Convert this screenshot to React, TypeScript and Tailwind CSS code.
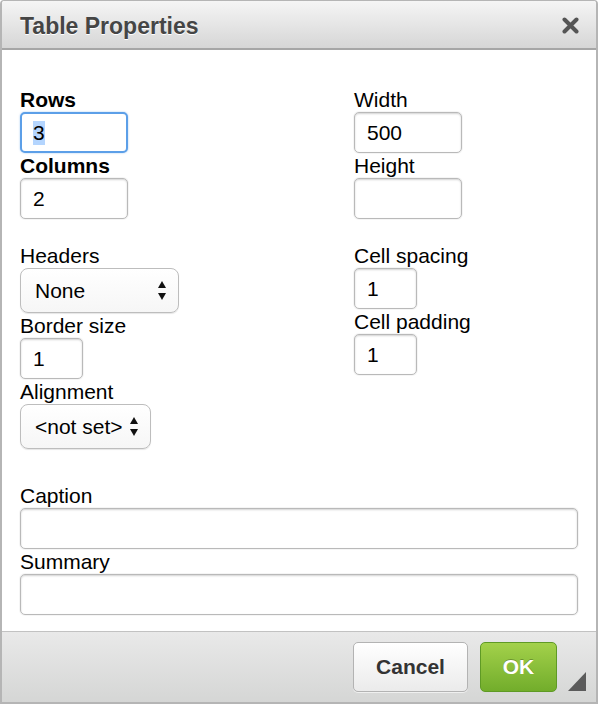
import React from "react";

const labelCls = "block h-[25px] text-[21px] leading-[25px] text-black";
const inputCls =
  "block h-[41px] rounded-[5px] border border-[#b9b9b9] bg-white px-[12px] text-[21px] text-black shadow-[inset_0_1px_2px_rgba(0,0,0,0.18),0_0_0_1px_rgba(0,0,0,0.04)] outline-none";

function Field({ label, value, width, bold }: { label: string; value?: string; width: string; bold?: boolean }) {
  return (
    <div>
      <label className={`${labelCls} ${bold ? "font-bold" : ""}`}>{label}</label>
      <input readOnly value={value ?? ""} className={`${inputCls} ${width}`} />
    </div>
  );
}

function Arrows() {
  return (
    <svg width="8" height="19" viewBox="0 0 8 19" className="shrink-0">
      <polygon points="4,0 8,7 0,7" fill="#111" />
      <polygon points="0,12 8,12 4,19" fill="#111" />
    </svg>
  );
}

function Select({ label, value, width }: { label: string; value: string; width: string }) {
  return (
    <div>
      <label className={labelCls}>{label}</label>
      <div
        className={`flex h-[45px] items-center justify-between rounded-[8px] border border-[#bdbdbd] bg-gradient-to-b from-white to-[#f6f6f6] pl-[14px] pr-[12px] text-[21px] text-black shadow-[0_1px_1px_rgba(0,0,0,0.1)] ${width}`}
      >
        <span>{value}</span>
        <Arrows />
      </div>
    </div>
  );
}

export default function App() {
  return (
    <div className="h-[704px] w-[599px] bg-white font-['Liberation_Sans',Arial,sans-serif]">
      <div className="relative flex h-full w-[598px] flex-col overflow-hidden rounded-t-[4px] border-x-2 border-t border-b-2 border-[#b5b5b5] bg-white">
        {/* Title bar */}
        <div className="flex h-[49px] shrink-0 items-center justify-between border-b-2 border-[#a6a6a6] bg-gradient-to-b from-[#f5f5f5] to-[#d6d6d6] pl-[18px] pr-[17px] pt-[3px]">
          <span className="text-[23px] font-bold text-[#454545] [text-shadow:0_1px_0_#fff]">Table Properties</span>
          <svg width="17" height="17" viewBox="0 0 17 17" className="-mt-[2px]">
            <path d="M2.5 2.5 L14.5 14.5 M14.5 2.5 L2.5 14.5" stroke="#555" strokeWidth="4" strokeLinecap="round" />
          </svg>
        </div>

        {/* Body */}
        <div className="flex-1 px-[18px] pt-[37px]">
          <div className="flex">
            <div className="w-[334px]">
              <div>
                <label className={`${labelCls} font-bold`}>Rows</label>
                <div className="flex h-[41px] w-[108px] items-center rounded-[5px] border-2 border-[#5c9fe8] bg-white pl-[11px] text-[21px] text-black shadow-[0_0_2px_rgba(92,159,232,0.6)]">
                  <span className="bg-[#b4d5fe] leading-[24px]">3</span>
                </div>
              </div>
              <Field label="Columns" value="2" width="w-[108px]" bold />
            </div>
            <div>
              <Field label="Width" value="500" width="w-[108px]" />
              <Field label="Height" width="w-[108px]" />
            </div>
          </div>

          <div className="mt-[24px] flex">
            <div className="w-[334px]">
              <Select label="Headers" value="None" width="w-[159px]" />
              <Field label="Border size" value="1" width="w-[63px]" />
              <Select label="Alignment" value="<not set>" width="w-[131px]" />
            </div>
            <div>
              <Field label="Cell spacing" value="1" width="w-[63px]" />
              <Field label="Cell padding" value="1" width="w-[63px]" />
            </div>
          </div>

          <div className="mt-[34px]">
            <Field label="Caption" width="w-[558px]" />
            <Field label="Summary" width="w-[558px]" />
          </div>
        </div>

        {/* Footer */}
        <div className="flex h-[71px] shrink-0 items-center justify-end gap-[12px] border-t border-[#c2c2c2] bg-gradient-to-b from-[#e9e9e9] to-[#d5d6d5] pr-[39px]">
          <button className="h-[50px] w-[115px] rounded-[5px] border border-[#b3b3b3] bg-gradient-to-b from-white to-[#ebebeb] text-[21px] font-bold text-[#333] shadow-[0_1px_0_rgba(255,255,255,0.6)]">
            Cancel
          </button>
          <button className="h-[50px] w-[77px] rounded-[5px] border border-[#5f9a25] bg-gradient-to-b from-[#a3d14a] to-[#72ad2b] text-[21px] font-bold text-white [text-shadow:0_-1px_0_rgba(0,0,0,0.25)]">
            OK
          </button>
          <svg width="18" height="19" viewBox="0 0 18 19" className="absolute bottom-[11px] right-[10px]">
            <polygon points="18,0 18,19 0,19" fill="#5b5b5b" />
          </svg>
        </div>
      </div>
    </div>
  );
}
